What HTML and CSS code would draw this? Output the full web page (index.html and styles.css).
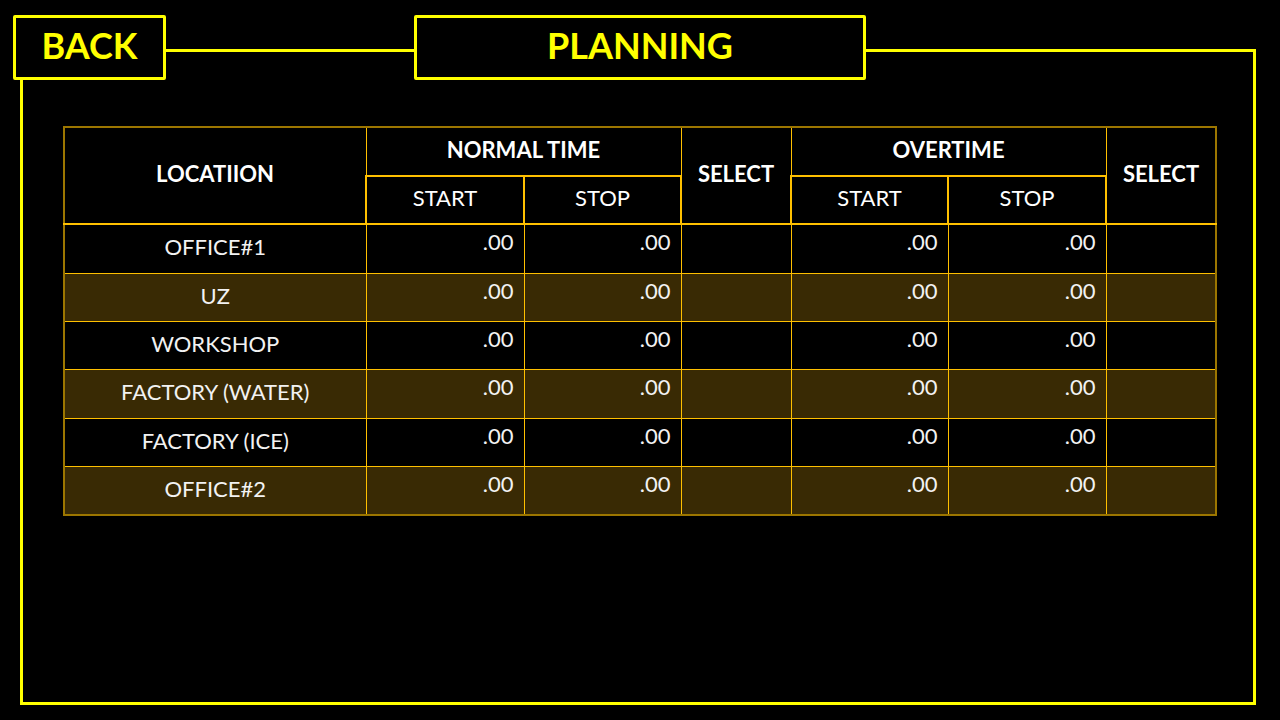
FILE: index.html
```html
<!DOCTYPE html>
<html>
<head>
<meta charset="utf-8">
<link rel="stylesheet" href="styles.css">
</head>
<body>
<div class="screen">
  <div class="frame">
    <table class="plan">
      <colgroup>
        <col class="c-loc"><col class="c-t"><col class="c-t2"><col class="c-sel"><col class="c-t2"><col class="c-t"><col class="c-sel">
      </colgroup>
      <thead>
        <tr class="h1">
          <th rowspan="2" class="hb">LOCATIION</th>
          <th colspan="2">NORMAL TIME</th>
          <th rowspan="2" class="hb">SELECT</th>
          <th colspan="2">OVERTIME</th>
          <th rowspan="2" class="hb">SELECT</th>
        </tr>
        <tr class="h2">
          <th class="sub">START</th>
          <th class="sub">STOP</th>
          <th class="sub">START</th>
          <th class="sub">STOP</th>
        </tr>
      </thead>
      <tbody>
        <tr class="tall"><td class="loc">OFFICE#1</td><td class="num">.00</td><td class="num">.00</td><td></td><td class="num">.00</td><td class="num">.00</td><td></td></tr>
        <tr class="alt"><td class="loc">UZ</td><td class="num">.00</td><td class="num">.00</td><td></td><td class="num">.00</td><td class="num">.00</td><td></td></tr>
        <tr><td class="loc">WORKSHOP</td><td class="num">.00</td><td class="num">.00</td><td></td><td class="num">.00</td><td class="num">.00</td><td></td></tr>
        <tr class="alt tall"><td class="loc">FACTORY (WATER)</td><td class="num">.00</td><td class="num">.00</td><td></td><td class="num">.00</td><td class="num">.00</td><td></td></tr>
        <tr><td class="loc">FACTORY (ICE)</td><td class="num">.00</td><td class="num">.00</td><td></td><td class="num">.00</td><td class="num">.00</td><td></td></tr>
        <tr class="alt last tall"><td class="loc">OFFICE#2</td><td class="num">.00</td><td class="num">.00</td><td></td><td class="num">.00</td><td class="num">.00</td><td></td></tr>
      </tbody>
    </table>
  </div>
  <div class="topbar">
    <div class="btn back">BACK</div>
    <div class="btn title">PLANNING</div>
  </div>
</div>
</body>
</html>
```

FILE: styles.css
```css
html, body {
  margin: 0;
  padding: 0;
  background: #000;
}
body {
  width: 1280px;
  height: 720px;
  overflow: hidden;
  font-family: "Lato", "Liberation Sans", sans-serif;
}
.screen {
  position: relative;
  box-sizing: border-box;
  width: 1280px;
  height: 720px;
  padding: 49px 0 0 20px;
}
.frame {
  box-sizing: border-box;
  width: 1236px;
  height: 656px;
  border: 3px solid #ffff00;
  padding: 74px 0 0 40px;
}
.topbar {
  position: absolute;
  top: 15px;
  left: 13px;
  display: flex;
  gap: 248px;
}
.btn {
  box-sizing: border-box;
  height: 65px;
  border: 3px solid #ffff00;
  border-radius: 2px;
  background: #000;
  color: #ffff00;
  font-weight: 700;
  font-size: 36px;
  display: flex;
  align-items: center;
  justify-content: center;
  line-height: 1;
  padding-bottom: 6px;
}
.back { width: 153px; }
.title { width: 452px; }

.plan {
  border-collapse: collapse;
  table-layout: fixed;
  width: 1153px;
  color: #fff;
  font-size: 22px;
}
.c-loc { width: 302px; }
.c-t { width: 158px; }
.c-t2 { width: 157px; }
.c-sel { width: 110px; }

.plan th, .plan td {
  border: 1px solid #ffc000;
  padding: 0;
  text-align: center;
  vertical-align: middle;
}
.plan th { font-weight: 700; padding-bottom: 5px; }
.plan .h1 th { height: 42px; border-top: 2px solid #9c7600; }
.plan .h1 th.hb { border-bottom: 2px solid #ffc000; }
.plan .h2 th { height: 41px; font-weight: 400; }
.plan th.sub { border: 2px solid #ffc000; }
.plan tr th:first-child, .plan tr td:first-child { border-left: 2px solid #9c7600; }
.plan tr th:last-child, .plan tr td:last-child { border-right: 2px solid #9c7600; }
.plan .h2 th:last-child { border-right: 2px solid #ffc000; }
.plan .h2 th:first-child { border-left: 2px solid #ffc000; }
.plan tr { height: 48px; }
.plan tr.tall { height: 49px; }
.plan td { color: #f2f2f2; }
.plan td.num {
  text-align: right;
  vertical-align: top;
  padding: 3px 10px 0 0;
}
.plan td.loc { padding-bottom: 4px; }
.plan tr.alt td { background: #392a04; }
.plan tr.last td { border-bottom: 2px solid #9c7600; }
```
